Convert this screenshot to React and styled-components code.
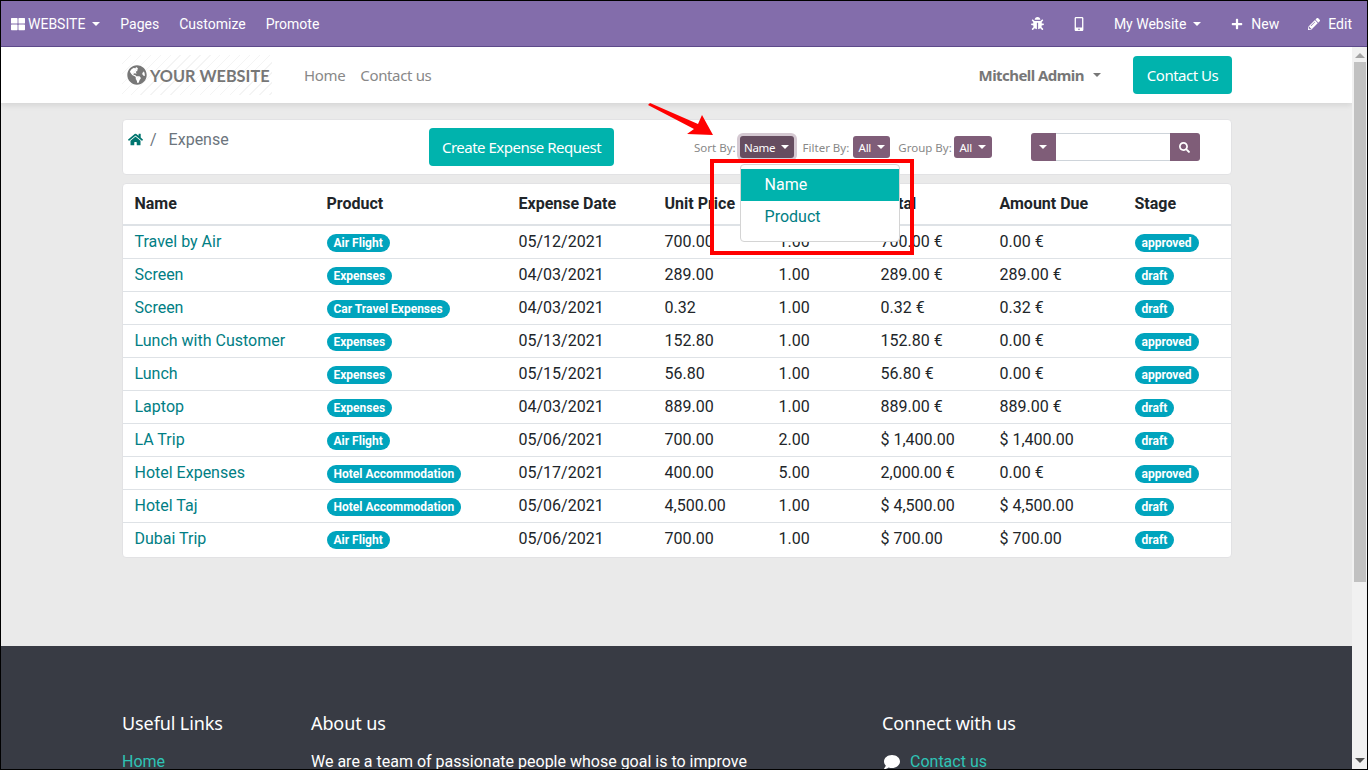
import styled, { createGlobalStyle } from "styled-components";
import {
	FaThLarge,
	FaBug,
	FaMobileAlt,
	FaPlus,
	FaPencilAlt,
	FaHome,
	FaSearch,
	FaComment,
	FaGlobeAmericas,
} from "react-icons/fa";

const rows = [
	["Travel by Air", "Air Flight", "05/12/2021", "700.00", "1.00", "700.00 €", "0.00 €", "approved"],
	["Screen", "Expenses", "04/03/2021", "289.00", "1.00", "289.00 €", "289.00 €", "draft"],
	["Screen", "Car Travel Expenses", "04/03/2021", "0.32", "1.00", "0.32 €", "0.32 €", "draft"],
	["Lunch with Customer", "Expenses", "05/13/2021", "152.80", "1.00", "152.80 €", "0.00 €", "approved"],
	["Lunch", "Expenses", "05/15/2021", "56.80", "1.00", "56.80 €", "0.00 €", "approved"],
	["Laptop", "Expenses", "04/03/2021", "889.00", "1.00", "889.00 €", "889.00 €", "draft"],
	["LA Trip", "Air Flight", "05/06/2021", "700.00", "2.00", "$ 1,400.00", "$ 1,400.00", "draft"],
	["Hotel Expenses", "Hotel Accommodation", "05/17/2021", "400.00", "5.00", "2,000.00 €", "0.00 €", "approved"],
	["Hotel Taj", "Hotel Accommodation", "05/06/2021", "4,500.00", "1.00", "$ 4,500.00", "$ 4,500.00", "draft"],
	["Dubai Trip", "Air Flight", "05/06/2021", "700.00", "1.00", "$ 700.00", "$ 700.00", "draft"],
];

const columns = [192, 192, 146, 114, 102, 119, 135, 108];
const headers = ["Name", "Product", "Expense Date", "Unit Price", "Quantity", "Total", "Amount Due", "Stage"];

const App = () => {
	return (
		<>
			<GlobalStyle />
			<Frame>
				<TopBar>
					<BarGroup>
						<BarItem $left={10} $right={20}>
							<FaThLarge size={14} />
							<BarLabel $gap={3}>WEBSITE</BarLabel>
							<Caret $gap={7} $color="#fff" />
						</BarItem>
						<BarItem $right={20}>Pages</BarItem>
						<BarItem $right={20}>Customize</BarItem>
						<BarItem>Promote</BarItem>
					</BarGroup>
					<BarGroup>
						<BarItem $right={28}>
							<FaBug size={13} />
						</BarItem>
						<BarItem $right={28}>
							<FaMobileAlt size={14} />
						</BarItem>
						<BarItem $right={30}>
							My Website
							<Caret $gap={7} $color="#fff" />
						</BarItem>
						<BarItem $right={29}>
							<FaPlus size={12} />
							<BarLabel $gap={8}>New</BarLabel>
						</BarItem>
						<BarItem $right={15}>
							<FaPencilAlt size={12} />
							<BarLabel $gap={8}>Edit</BarLabel>
						</BarItem>
					</BarGroup>
				</TopBar>
				<Body>
					<Page>
						<NavBar>
							<Container>
								<NavRow>
									<Logo>
										<FaGlobeAmericas size={20} color="#777" />
										<LogoText>YOUR WEBSITE</LogoText>
									</Logo>
									<NavLink>Home</NavLink>
									<NavLink>Contact us</NavLink>
									<UserMenu>
										Mitchell Admin
										<Caret $gap={9} $color="#777" />
									</UserMenu>
									<TealButton $h={38} $w={99}>
										Contact Us
									</TealButton>
								</NavRow>
							</Container>
						</NavBar>
						<Main>
							<Container>
								<Panel>
									<Breadcrumb>
										<FaHome size={15} color="#00756f" />
										<Slash>/</Slash>
										<Crumb>Expense</Crumb>
									</Breadcrumb>
									<TealButton $h={38} $w={185}>
										Create Expense Request
									</TealButton>
									<Controls>
										<ControlLabel>Sort By:</ControlLabel>
										<DropWrap>
											<SmallButton $active $w={54}>
												Name
												<Caret $gap={6} $color="#fff" />
											</SmallButton>
											<Dropdown>
												<DropItem $selected>Name</DropItem>
												<DropItem>Product</DropItem>
											</Dropdown>
										</DropWrap>
										<ControlLabel $left={9}>Filter By:</ControlLabel>
										<SmallButton $w={37}>
											All
											<Caret $gap={6} $color="#fff" />
										</SmallButton>
										<ControlLabel $left={8} $right={2}>
											Group By:
										</ControlLabel>
										<SmallButton $w={38}>
											All
											<Caret $gap={6} $color="#fff" />
										</SmallButton>
									</Controls>
									<SearchBox>
										<SearchToggle>
											<Caret $color="#fff" />
										</SearchToggle>
										<SearchInput />
										<SearchButton>
											<FaSearch size={11} />
										</SearchButton>
									</SearchBox>
								</Panel>
								<TableCard>
									<Table>
										<colgroup>
											{columns.map((w, i) => (
												<col key={i} style={{ width: w }} />
											))}
										</colgroup>
										<thead>
											<tr>
												{headers.map((h) => (
													<HeadCell key={h}>{h}</HeadCell>
												))}
											</tr>
										</thead>
										<tbody>
											{rows.map((row, i) => (
												<tr key={i}>
													<Cell>
														<RowLink>{row[0]}</RowLink>
													</Cell>
													<Cell>
														<Badge>{row[1]}</Badge>
													</Cell>
													<Cell>{row[2]}</Cell>
													<Cell>{row[3]}</Cell>
													<Cell>{row[4]}</Cell>
													<Cell>{row[5]}</Cell>
													<Cell>{row[6]}</Cell>
													<Cell>
														<Badge>{row[7]}</Badge>
													</Cell>
												</tr>
											))}
										</tbody>
									</Table>
								</TableCard>
							</Container>
						</Main>
						<Footer>
							<Container>
								<FooterGrid>
									<div>
										<FooterTitle>Useful Links</FooterTitle>
										<FooterLink>Home</FooterLink>
									</div>
									<div>
										<FooterTitle>About us</FooterTitle>
										<FooterText>
											We are a team of passionate people whose goal is to improve
										</FooterText>
									</div>
									<div>
										<FooterTitle>Connect with us</FooterTitle>
										<ContactRow>
											<FaComment size={16} color="#fff" />
											<FooterLink>Contact us</FooterLink>
										</ContactRow>
									</div>
								</FooterGrid>
							</Container>
						</Footer>
					</Page>
					<Scrollbar>
						<ScrollUp />
						<ScrollThumb />
						<ScrollDown />
					</Scrollbar>
				</Body>
				<RedBox />
				<ArrowMark viewBox="0 0 70 36" width="70" height="36">
					<path d="M1 2 L3 0 L51 21 L55 12 L66 32 L40 31 L47 26 Z" fill="#f00" />
				</ArrowMark>
			</Frame>
		</>
	);
};

export default App;

const GlobalStyle = createGlobalStyle`
	* {
		box-sizing: border-box;
	}
	html, body {
		margin: 0;
		height: 100%;
		overflow: hidden;
		background: #000;
	}
	body {
		font-family: Roboto, "Liberation Sans", sans-serif;
		font-size: 16px;
		color: #212529;
	}
`;

const Frame = styled.div`
	position: relative;
	width: 1368px;
	height: 770px;
	border: 1px solid #000;
	display: flex;
	flex-direction: column;
	overflow: hidden;
	background: #fff;
`;

const TopBar = styled.div`
	flex: none;
	height: 46px;
	background: #836dab;
	border-bottom: 1px solid #5d4a8a;
	display: flex;
	justify-content: space-between;
	align-items: center;
	color: #fff;
	font-size: 14px;
`;

const BarGroup = styled.div`
	display: flex;
	align-items: center;
`;

const BarItem = styled.div`
	display: flex;
	align-items: center;
	padding-left: ${(p) => p.$left || 0}px;
	padding-right: ${(p) => p.$right || 0}px;
`;

const BarLabel = styled.span`
	margin-left: ${(p) => p.$gap}px;
`;

const Caret = styled.span`
	display: inline-block;
	margin-left: ${(p) => p.$gap || 0}px;
	border-top: 4.8px solid ${(p) => p.$color};
	border-left: 4.8px solid transparent;
	border-right: 4.8px solid transparent;
	width: 0;
	height: 0;
`;

const Body = styled.div`
	flex: 1;
	min-height: 0;
	display: flex;
`;

const Page = styled.div`
	flex: 1;
	min-width: 0;
	display: flex;
	flex-direction: column;
	overflow: hidden;
	background: #eaeaea;
`;

const Container = styled.div`
	width: 1110px;
	margin-left: 121px;
`;

const NavBar = styled.div`
	flex: none;
	height: 56px;
	background: #fff;
	box-shadow: 0 2px 6px rgba(0, 0, 0, 0.1);
	position: relative;
`;

const NavRow = styled.div`
	height: 56px;
	display: flex;
	align-items: center;
`;

const Logo = styled.div`
	width: 150px;
	height: 40px;
	margin-right: 32px;
	padding-left: 5px;
	display: flex;
	align-items: center;
	background: repeating-linear-gradient(135deg, #fff 0 6px, #f4f4f4 6px 7px);
`;

const LogoText = styled.span`
	margin-left: 3px;
	font-family: Lato, sans-serif;
	font-size: 16.3px;
	font-weight: 700;
	color: #777;
	white-space: nowrap;
`;

const NavLink = styled.a`
	margin-right: 15px;
	font-family: "Noto Sans", sans-serif;
	font-size: 15px;
	letter-spacing: -0.35px;
	color: #888;
`;

const UserMenu = styled.div`
	margin-left: auto;
	margin-right: 32px;
	display: flex;
	align-items: center;
	font-family: "Noto Sans", sans-serif;
	font-size: 15px;
	letter-spacing: -0.55px;
	font-weight: 700;
	color: #777;
`;

const TealButton = styled.button`
	flex: none;
	width: ${(p) => p.$w}px;
	height: ${(p) => p.$h}px;
	padding: 0;
	border: none;
	border-radius: 4px;
	background: #00b3ad;
	color: #fff;
	font-family: "Noto Sans", sans-serif;
	font-size: 15px;
	letter-spacing: -0.5px;
`;

const Main = styled.div`
	flex: none;
	height: 543px;
	padding-top: 16px;
`;

const Panel = styled.div`
	height: 56px;
	background: #fff;
	border: 1px solid #e2e2e4;
	border-radius: 4px;
	display: flex;
	align-items: center;
`;

const Breadcrumb = styled.div`
	align-self: flex-start;
	width: 306px;
	padding: 11px 0 0 5px;
	display: flex;
	align-items: center;
	height: 28px;
`;

const Slash = styled.span`
	margin-left: 7px;
	color: #6c757d;
`;

const Crumb = styled.span`
	margin-left: 12px;
	color: #6c757d;
`;

const Controls = styled.div`
	margin-left: 80px;
	display: flex;
	align-items: center;
`;

const ControlLabel = styled.span`
	margin-left: ${(p) => p.$left || 0}px;
	margin-right: ${(p) => p.$right ?? 4}px;
	font-family: "Noto Sans", sans-serif;
	font-size: 11.5px;
	color: #888;
`;

const DropWrap = styled.div`
	position: relative;
	display: flex;
`;

const SmallButton = styled.button`
	width: ${(p) => p.$w}px;
	height: 22px;
	padding: 0;
	border: none;
	border-radius: 3px;
	background: ${(p) => (p.$active ? "#664d60" : "#7f5d78")};
	box-shadow: ${(p) => (p.$active ? "0 0 0 3px #d5c9d2" : "none")};
	color: #fff;
	font-family: "Noto Sans", sans-serif;
	font-size: 11.5px;
	letter-spacing: -0.3px;
	display: flex;
	align-items: center;
	justify-content: center;
`;

const Dropdown = styled.div`
	position: absolute;
	top: 28px;
	left: 0;
	width: 160px;
	height: 78px;
	padding-top: 4px;
	background: #fff;
	border: 1px solid #d4d4d4;
	border-radius: 4px;
	z-index: 5;
`;

const DropItem = styled.div`
	height: 32px;
	padding: 0 0 2px 24px;
	display: flex;
	align-items: center;
	background: ${(p) => (p.$selected ? "#00b3ad" : "transparent")};
	color: ${(p) => (p.$selected ? "#fff" : "#017e84")};
`;

const SearchBox = styled.div`
	margin-left: 39px;
	display: flex;
	height: 28px;
`;

const SearchToggle = styled.div`
	width: 25px;
	background: #7f5d78;
	border-radius: 3px 0 0 3px;
	display: flex;
	align-items: center;
	justify-content: center;
`;

const SearchInput = styled.div`
	width: 114px;
	background: #fff;
	border-top: 1px solid #ced4da;
	border-bottom: 1px solid #ced4da;
`;

const SearchButton = styled.div`
	width: 30px;
	background: #7f5d78;
	border-radius: 0 3px 3px 0;
	color: #fff;
	display: flex;
	align-items: center;
	justify-content: center;
`;

const TableCard = styled.div`
	margin-top: 8px;
	background: #fff;
	border: 1px solid #e2e2e4;
	border-radius: 4px;
	overflow: hidden;
`;

const Table = styled.table`
	width: 1108px;
	table-layout: fixed;
	border-collapse: collapse;
`;

const HeadCell = styled.th`
	height: 41px;
	padding: 0 0 2px 11.5px;
	text-align: left;
	font-weight: 700;
	color: #212529;
	border-bottom: 2px solid #dee2e6;
	white-space: nowrap;
`;

const Cell = styled.td`
	height: 33px;
	padding: 0 0 0 11.5px;
	border-bottom: 1px solid #dee2e6;
	white-space: nowrap;
	tr:last-child & {
		height: 35px;
		padding-bottom: 2px;
		border-bottom: none;
	}
`;

const RowLink = styled.a`
	color: #017e84;
`;

const Badge = styled.span`
	display: inline-block;
	height: 18px;
	line-height: 18px;
	padding: 0 7px;
	border-radius: 9px;
	background: #00a4bd;
	color: #fff;
	font-size: 12px;
	font-weight: 700;
	vertical-align: -1px;
`;

const Footer = styled.div`
	flex: 1;
	background: #383b44;
	padding-top: 65px;
`;

const FooterGrid = styled.div`
	display: grid;
	grid-template-columns: 189px 571px 1fr;
`;

const FooterTitle = styled.div`
	font-family: "Noto Sans", sans-serif;
	font-size: 18px;
	letter-spacing: -0.1px;
	color: #fff;
	margin-bottom: 17px;
`;

const FooterLink = styled.a`
	color: #2ec4b6;
`;

const FooterText = styled.div`
	color: #fff;
`;

const ContactRow = styled.div`
	display: flex;
	align-items: center;
	gap: 10px;
	padding-left: 2px;
`;

const Scrollbar = styled.div`
	flex: none;
	width: 15px;
	background: #f1f1f1;
	position: relative;
	display: flex;
	flex-direction: column;
	align-items: center;
`;

const ScrollUp = styled.div`
	margin-top: 6px;
	border-bottom: 5px solid #a3a3a3;
	border-left: 5px solid transparent;
	border-right: 5px solid transparent;
`;

const ScrollThumb = styled.div`
	margin-top: 4px;
	width: 12px;
	height: 520px;
	background: #c1c1c1;
`;

const ScrollDown = styled.div`
	margin-top: auto;
	margin-bottom: 6px;
	border-top: 5px solid #505050;
	border-left: 5px solid transparent;
	border-right: 5px solid transparent;
`;

const RedBox = styled.div`
	position: absolute;
	left: 709px;
	top: 158px;
	width: 204px;
	height: 96px;
	border: 4px solid #f00;
	z-index: 10;
`;

const ArrowMark = styled.svg`
	position: absolute;
	left: 646px;
	top: 102px;
	z-index: 10;
`;
